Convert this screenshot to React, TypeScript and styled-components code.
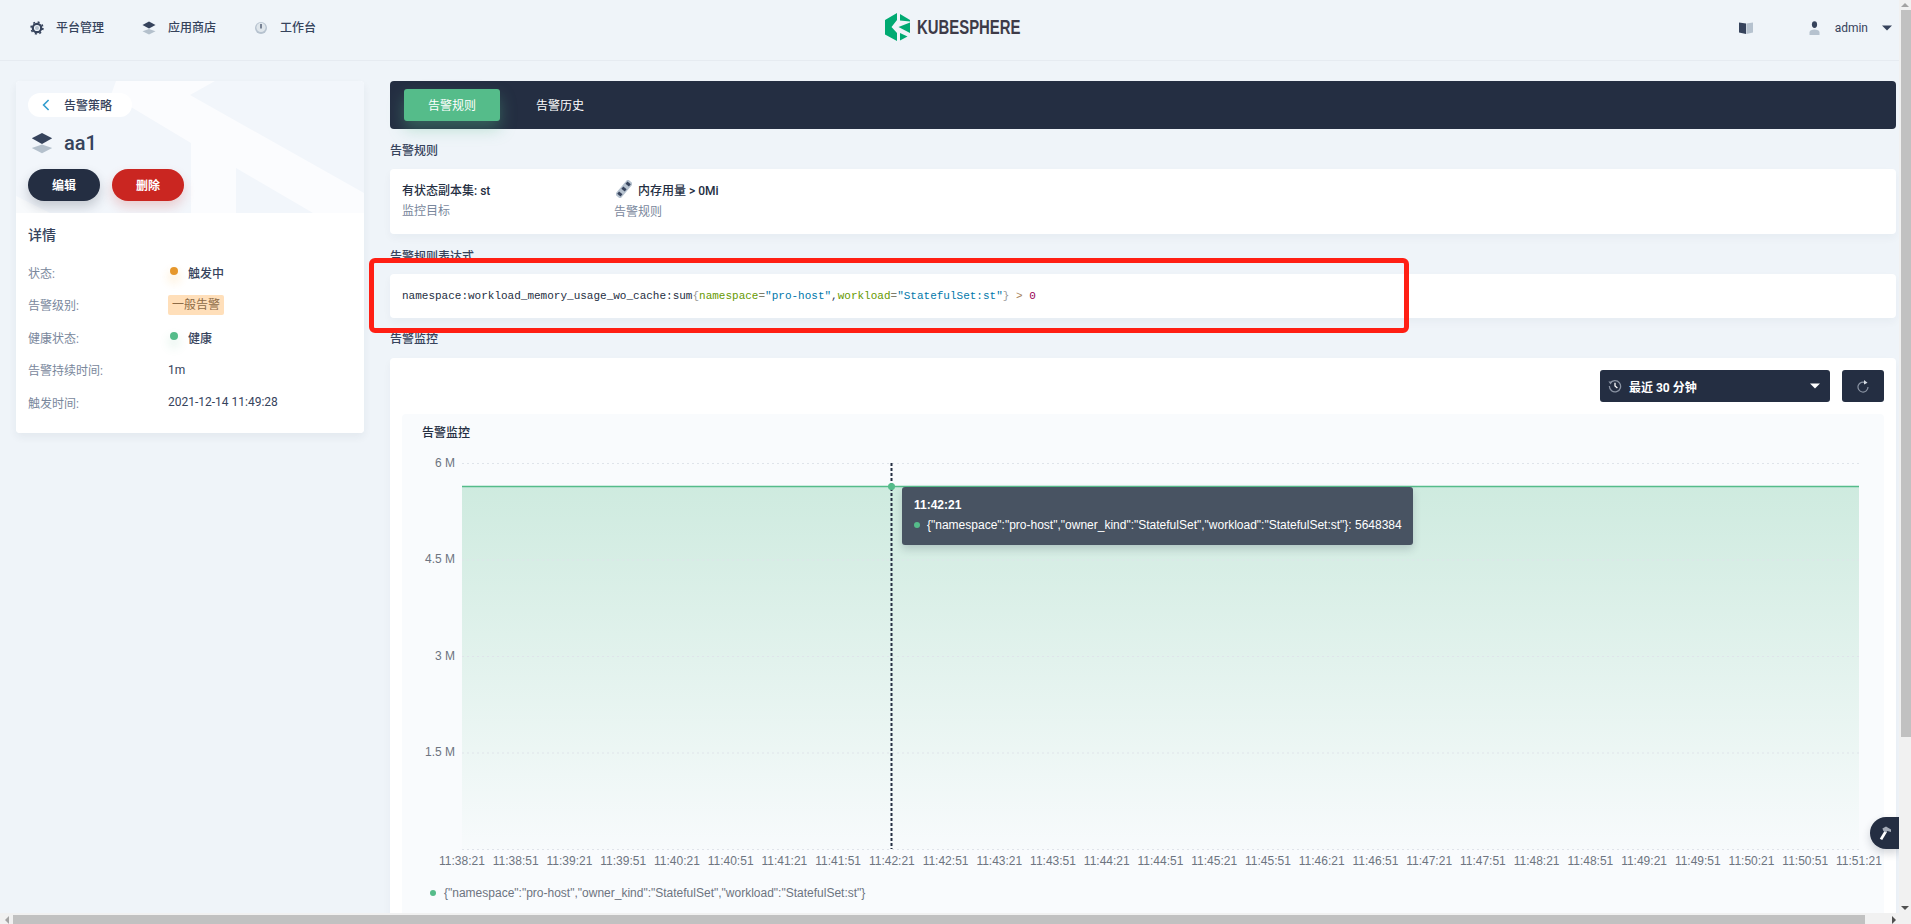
import React from 'react';
import styled, { createGlobalStyle } from 'styled-components';

const sans = `Roboto, "Noto Sans CJK SC", "Liberation Sans", sans-serif`;
const chartFont = `"Liberation Sans", Arial, sans-serif`;

const Global = createGlobalStyle`
  html, body { margin: 0; padding: 0; height: 100%; overflow: hidden; background: #eff4f9; }
  body { font-family: ${sans}; font-size: 12px; color: #242e42; }
  * { box-sizing: border-box; }
`;

const Shell = styled.div`
  display: grid;
  grid-template-columns: 1fr 12px;
  grid-template-rows: 1fr 11px;
  width: 100vw;
  height: 100vh;
`;
const Viewport = styled.div`
  position: relative;
  overflow: hidden;
  background: #eff4f9;
`;
const TrackV = styled.div`
  background: #f1f1f1;
  display: flex;
  flex-direction: column;
  align-items: stretch;
`;
const TrackH = styled.div`
  background: #f1f1f1;
  display: flex;
  align-items: stretch;
  padding-top: 2px;
`;
const Corner = styled.div`
  background: #f1f1f1;
`;
const ArrowCell = styled.div<{ $size: number }>`
  flex: 0 0 ${p => p.$size}px;
  display: flex;
  align-items: center;
  justify-content: center;
`;
const ThumbV = styled.div`
  flex: 0 0 727px;
  margin-left: 2px;
  background: #c1c1c1;
`;
const ThumbH = styled.div`
  flex: 0 0 1852px;
  background: #c1c1c1;
`;
const Spacer = styled.div`
  flex: 1;
`;

const Header = styled.header`
  display: flex;
  align-items: center;
  justify-content: space-between;
  height: 61px;
  padding: 0 7px 5px 30px;
  border-bottom: 1px solid #e6ebf1;
  position: relative;
`;
const Nav = styled.nav`
  display: flex;
  align-items: center;
  gap: 38px;
`;
const NavItem = styled.div`
  display: flex;
  align-items: center;
  gap: 12px;
  font-weight: 500;
  color: #36435c;
  line-height: 16px;
`;
const LogoWrap = styled.div`
  position: absolute;
  left: 885px;
  top: 13px;
  display: flex;
  align-items: center;
  gap: 7px;
`;
const LogoText = styled.span`
  display: inline-block;
  font-family: "Liberation Sans", sans-serif;
  font-size: 20px;
  line-height: 28px;
  color: #3e3b48;
  font-weight: 700;
  transform: scaleX(0.745);
  transform-origin: left center;
`;
const UserArea = styled.div`
  display: flex;
  align-items: center;
  color: #36435c;
`;
const UserGap = styled.span`
  width: 56px;
`;
const UserName = styled.span`
  margin: 0 14px 0 15px;
  font-size: 12px;
`;

const Body = styled.main`
  display: flex;
  align-items: flex-start;
  gap: 26px;
  padding: 20px 3px 0 16px;
`;
const Side = styled.aside`
  flex: 0 0 348px;
  border-radius: 4px;
  overflow: hidden;
  background: #fff;
  box-shadow: 0 4px 8px rgba(36, 46, 66, 0.06);
`;
const Hero = styled.div`
  position: relative;
  height: 132px;
  padding: 12px;
  background: #f2f6fb;
`;
const HeroArt = styled.svg`
  position: absolute;
  inset: 0;
`;
const BackPill = styled.div`
  position: relative;
  display: flex;
  align-items: center;
  width: 104px;
  height: 24px;
  border-radius: 12px;
  background: #fff;
  padding: 0 0 1px 14px;
  gap: 14px;
  color: #36435c;
  font-weight: 500;
`;
const TitleRow = styled.div`
  position: relative;
  display: flex;
  align-items: center;
  margin-top: 13px;
  padding-left: 3px;
  gap: 11px;
  height: 26px;
`;
const Name = styled.h1`
  margin: 0;
  font-size: 20px;
  line-height: 26px;
  font-weight: 500;
  color: #36435c;
`;
const Buttons = styled.div`
  position: relative;
  display: flex;
  gap: 12px;
  margin-top: 13px;
`;
const PillButton = styled.button<{ $color: string; $shadow: string }>`
  width: 72px;
  height: 32px;
  padding: 0 0 2px;
  border: 0;
  border-radius: 16px;
  background: ${p => p.$color};
  color: #fff;
  font-family: ${sans};
  font-size: 12px;
  font-weight: 700;
  box-shadow: 0 6px 12px ${p => p.$shadow};
`;
const Details = styled.section`
  position: relative;
  height: 220px;
  padding: 12px;
  background: #fff;
`;
const DetailsTitle = styled.h3`
  margin: 0 0 11px;
  font-size: 14px;
  line-height: 20px;
  font-weight: 500;
  color: #36435c;
`;
const DetailRow = styled.div`
  display: grid;
  grid-template-columns: 140px 1fr;
  align-items: center;
  height: 32.5px;
`;
const DetailLabel = styled.span`
  color: #79879c;
`;
const DetailValue = styled.span<{ $strong?: boolean }>`
  display: flex;
  align-items: center;
  gap: 10px;
  color: #36435c;
  font-weight: ${p => (p.$strong ? 500 : 400)};
`;
const Dot = styled.i<{ $color: string; $halo: string }>`
  display: block;
  width: 8px;
  height: 8px;
  margin: -2px 0 0 2px;
  border-radius: 50%;
  background: ${p => p.$color};
  box-shadow: 0 6px 8px 3px ${p => p.$halo};
`;
const Tag = styled.span`
  display: inline-block;
  height: 20px;
  padding: 0 4px;
  line-height: 20px;
  border-radius: 2px;
  background: #ffdfba;
  color: #8d6b47;
`;

const Content = styled.section`
  flex: 1;
  min-width: 0;
`;
const Tabs = styled.div`
  display: flex;
  align-items: center;
  height: 48px;
  padding: 0 8px 0 14px;
  border-radius: 4px;
  background: #242e42;
  gap: 36px;
`;
const Tab = styled.div<{ $active?: boolean }>`
  width: ${p => (p.$active ? '96px' : 'auto')};
  height: 32px;
  line-height: 34px;
  text-align: center;
  border-radius: 3px;
  color: #fff;
  background: ${p => (p.$active ? '#55bc8a' : 'transparent')};
  box-shadow: ${p => (p.$active ? '0 8px 16px rgba(85, 188, 138, 0.36)' : 'none')};
`;
const SectionTitle = styled.h4<{ $top: number; $bottom: number }>`
  margin: ${p => p.$top}px 0 ${p => p.$bottom}px;
  font-size: 12px;
  line-height: 16px;
  font-weight: 500;
  color: #36435c;
`;
const Card = styled.div`
  border-radius: 4px;
  background: #fff;
  box-shadow: 0 4px 8px rgba(36, 46, 66, 0.04);
`;
const RuleCard = styled(Card)`
  display: flex;
  height: 65px;
  padding: 10px 12px;
`;
const RuleCol = styled.div<{ $width: number }>`
  flex: 0 0 ${p => p.$width}px;
  display: flex;
  flex-direction: column;
`;
const RuleMain = styled.div`
  display: flex;
  align-items: center;
  height: 20px;
  gap: 6px;
  font-weight: 500;
  color: #242e42;
`;
const RuleIcon = styled.span`
  display: flex;
  margin-left: 2px;
`;
const RuleSub = styled.div<{ $top: number }>`
  margin-top: ${p => p.$top}px;
  line-height: 16px;
  color: #79879c;
`;
const ExprCard = styled(Card)`
  display: flex;
  align-items: center;
  height: 44px;
  padding: 0 12px;
`;
const Code = styled.code`
  font-family: "Liberation Mono", monospace;
  font-size: 11px;
  line-height: 16px;
  color: #242e42;
  white-space: pre;
`;
const Tok = styled.span<{ $c: string }>`
  color: ${p => p.$c};
`;
const Highlight = styled.div`
  position: absolute;
  left: 369px;
  top: 258px;
  width: 1040px;
  height: 75px;
  border: 5px solid #ff1f14;
  border-radius: 6px;
  pointer-events: none;
`;
const Monitor = styled(Card)`
  padding: 12px;
  height: 640px;
`;
const Toolbar = styled.div`
  display: flex;
  justify-content: flex-end;
  gap: 12px;
  height: 32px;
`;
const Select = styled.div`
  display: flex;
  align-items: center;
  width: 230px;
  height: 32px;
  padding: 0 10px 0 8px;
  gap: 7px;
  border-radius: 3px;
  background: #242e42;
  color: #fff;
  font-weight: 700;
`;
const SelectLabel = styled.span`
  flex: 1;
`;
const IconButton = styled.div`
  display: flex;
  align-items: center;
  justify-content: center;
  width: 42px;
  height: 32px;
  border-radius: 3px;
  background: #242e42;
`;
const ChartPanel = styled.div`
  position: relative;
  margin-top: 12px;
  padding: 11px 0 0;
  border-radius: 4px;
  background: #f9fbfd;
  height: 600px;
`;
const ChartTitle = styled.div`
  padding-left: 20px;
  line-height: 16px;
  font-weight: 500;
  color: #242e42;
`;
const ChartSvg = styled.svg`
  display: block;
  margin-top: 11px;
`;
const AxisText = styled.text`
  font-family: ${chartFont};
  font-size: 12px;
  fill: #6d7480;
`;
const Legend = styled.div`
  display: flex;
  align-items: center;
  gap: 8px;
  margin: 13px 0 0 28px;
  font-family: ${chartFont};
  color: #6d7480;
  line-height: 16px;
`;
const LegendDot = styled.i`
  display: block;
  flex: none;
  width: 6px;
  height: 6px;
  border-radius: 50%;
  background: #55bc8a;
`;
const Tooltip = styled.div`
  position: absolute;
  left: 500px;
  top: 73px;
  width: 511px;
  height: 58px;
  padding: 10px 12px;
  border-radius: 3px;
  background: #485362;
  color: #fff;
  font-family: ${chartFont};
  box-shadow: 0 4px 8px rgba(36, 46, 66, 0.2);
`;
const TooltipTime = styled.div`
  font-weight: 700;
  line-height: 16px;
`;
const TooltipRow = styled.div`
  display: flex;
  align-items: center;
  gap: 7px;
  margin-top: 4px;
  line-height: 16px;
  white-space: nowrap;
`;
const FloatTool = styled.div`
  position: absolute;
  right: 0;
  top: 817px;
  width: 29px;
  height: 32px;
  display: flex;
  align-items: center;
  justify-content: center;
  border-radius: 16px 0 0 16px;
  background: #242e42;
  box-shadow: 0 4px 8px rgba(36, 46, 66, 0.2);
`;

const Triangle = ({ dir }: { dir: 'up' | 'down' | 'left' | 'right' }) => {
  const pts = { up: '0,5 4,1 8,5', down: '0,1 8,1 4,5', left: '5,0 5,8 1,4', right: '1,0 5,4 1,8' }[dir];
  const horizontal = dir === 'left' || dir === 'right';
  return (
    <svg width={horizontal ? 6 : 8} height={horizontal ? 8 : 6}>
      <polygon points={pts} fill={dir === 'up' || dir === 'left' ? '#a3a3a3' : '#505050'} />
    </svg>
  );
};

const Gear = () => (
  <svg width="14" height="14" viewBox="0 0 14 14" fill="none">
    <circle cx="7" cy="7" r="4.2" stroke="#36435c" strokeWidth="2.2" />
    <circle cx="7" cy="7" r="5.9" stroke="#36435c" strokeWidth="1.6" strokeDasharray="2 2.63" />
    <circle cx="7" cy="7" r="2" fill="#b6c2cf" />
  </svg>
);
const Layers = ({ s = 14 }: { s?: number }) => (
  <svg width={s} height={s} viewBox="0 0 14 14">
    <polygon points="7,8 13.5,10.2 7,13.6 0.5,10.2" fill="#b4c0cc" />
    <polygon points="7,0.6 13.5,4 7,7.6 0.5,4" fill="#36435c" />
  </svg>
);
const Dial = () => (
  <svg width="14" height="14" viewBox="0 0 14 14">
    <circle cx="7" cy="7" r="6" fill="#b6c2cf" />
    <circle cx="7" cy="6.4" r="4.6" fill="#dfe6ec" />
    <rect x="6.4" y="3" width="1.2" height="4.5" fill="#36435c" />
  </svg>
);
const Logo = () => (
  <svg width="25" height="28" viewBox="0 0 25 28">
    <polygon points="0,7 12,0 12,7 6.5,14 12,20 12,28 0,21.5" fill="#00aa72" />
    <polygon points="15,1 25,7 25,8.5 15,7.5" fill="#00aa72" />
    <polygon points="13.5,14 25,9.5 25,20" fill="#00aa72" />
    <polygon points="15,20 22.5,23.5 15,27.5" fill="#00aa72" />
  </svg>
);
const Book = () => (
  <svg width="14" height="12" viewBox="0 0 14 12">
    <polygon points="0,0.5 7,1.5 7,12 0,10.5" fill="#36435c" />
    <polygon points="7.4,1.5 14,0.5 14,10.5 7.4,12" fill="#b6c2cf" />
  </svg>
);
const User = () => (
  <svg width="11" height="14" viewBox="0 0 11 14">
    <path d="M0.5 14v-2.5C0.5 9.5 3 8.6 5.5 8.6s5 .9 5 2.9V14z" fill="#b6c2cf" />
    <ellipse cx="5.5" cy="3.6" rx="2.6" ry="3.4" fill="#36435c" />
  </svg>
);
const Caret = ({ color }: { color: string }) => (
  <svg width="10" height="6" viewBox="0 0 10 6">
    <polygon points="0,0.5 10,0.5 5,5.5" fill={color} />
  </svg>
);
const Chevron = () => (
  <svg width="8" height="12" viewBox="0 0 8 12" fill="none">
    <path d="M6.6 1L1.6 6l5 5" stroke="#329dce" strokeWidth="1.6" />
  </svg>
);
const Memory = () => (
  <svg width="16" height="18" viewBox="0 0 16 18">
    <g transform="rotate(-50 8 9)">
      <rect x="-2" y="5.5" width="20" height="7" rx="1" fill="#b6c2cf" />
      <rect x="0" y="6.8" width="3" height="4.4" fill="#36435c" />
      <rect x="6.5" y="6.8" width="3" height="4.4" fill="#36435c" />
      <rect x="13" y="6.8" width="3" height="4.4" fill="#36435c" />
    </g>
  </svg>
);
const Clock = () => (
  <svg width="14" height="14" viewBox="0 0 14 14" fill="none">
    <path d="M2.2 4.4A5.6 5.6 0 1 1 1.4 7" stroke="#8a93a3" strokeWidth="1.3" />
    <polygon points="0.4,2.6 4,2.6 2.6,5.6" fill="#8a93a3" />
    <path d="M7 3.8V7l2.4 2" stroke="#fff" strokeWidth="1.3" />
  </svg>
);
const Refresh = () => (
  <svg width="12" height="13" viewBox="0 0 12 13" fill="none">
    <path d="M8.6 2.8A5 5 0 1 0 11 7" stroke="#8a93a3" strokeWidth="1.2" />
    <polygon points="7,0 10.5,2.8 7,4.6" fill="#d8dde4" />
  </svg>
);
const Hammer = () => (
  <svg width="14" height="14" viewBox="0 0 14 14">
    <polygon points="6.6,4.8 9,6 4.2,14 1.8,12.8" fill="#fff" />
    <polygon points="4.4,2.6 8,0.6 13,3.6 13,6 9.4,5 8,6.6 5.4,5" fill="#a4abb7" />
  </svg>
);

const times: string[] = [];
for (let i = 0; i <= 26; i++) {
  const total = 38 * 60 + 21 + i * 30;
  const m = Math.floor(total / 60);
  const s = total % 60;
  times.push(`11:${m}:${String(s).padStart(2, '0')}`);
}
const X0 = 60;
const X1 = 1457;
const Y = (py: number) => py - 452;
const grid = [
  { label: '6 M', y: 463.5 },
  { label: '4.5 M', y: 560 },
  { label: '3 M', y: 656.5 },
  { label: '1.5 M', y: 753 },
  { label: '', y: 849.5 },
];

const Chart = () => (
  <ChartSvg width="1482" height="420" viewBox="0 0 1482 420">
    <defs>
      <linearGradient id="area" x1="0" y1="0" x2="0" y2="1">
        <stop offset="0" stopColor="#55bc8a" stopOpacity="0.26" />
        <stop offset="1" stopColor="#55bc8a" stopOpacity="0.01" />
      </linearGradient>
    </defs>
    <rect x={X0} y={Y(486.5)} width={X1 - X0} height={849 - 486.5} fill="url(#area)" />
    {grid.map(g => (
      <g key={g.y}>
        <line x1={X0} x2={X1} y1={Y(g.y)} y2={Y(g.y)} stroke="#dfe4ea" strokeDasharray="2 3" />
        {g.label && (
          <AxisText x={53} y={Y(g.y) + 3} textAnchor="end">
            {g.label}
          </AxisText>
        )}
      </g>
    ))}
    <line x1={X0} x2={X1} y1={Y(486.5)} y2={Y(486.5)} stroke="#55bc8a" strokeWidth="1.5" />
    {times.map((t, i) => (
      <AxisText key={t} x={X0 + ((X1 - X0) * i) / 26} y={Y(865)} textAnchor="middle">
        {t}
      </AxisText>
    ))}
    <line x1={489.5} x2={489.5} y1={Y(463)} y2={Y(849)} stroke="#242e42" strokeWidth="2" strokeDasharray="3 2" />
    <circle cx={489.5} cy={Y(486.5)} r="3.5" fill="#55bc8a" />
  </ChartSvg>
);

const details: { label: string; node: React.ReactNode }[] = [
  {
    label: '状态:',
    node: (
      <DetailValue $strong>
        <Dot $color="#e6972b" $halo="rgba(245,166,35,0.12)" />
        触发中
      </DetailValue>
    ),
  },
  { label: '告警级别:', node: <DetailValue><Tag>一般告警</Tag></DetailValue> },
  {
    label: '健康状态:',
    node: (
      <DetailValue $strong>
        <Dot $color="#55bc8a" $halo="rgba(85,188,138,0.1)" />
        健康
      </DetailValue>
    ),
  },
  { label: '告警持续时间:', node: <DetailValue>1m</DetailValue> },
  { label: '触发时间:', node: <DetailValue>2021-12-14 11:49:28</DetailValue> },
];

export default function App() {
  return (
    <>
      <Global />
      <Shell>
        <Viewport>
          <Header>
            <Nav>
              <NavItem><Gear />平台管理</NavItem>
              <NavItem><Layers />应用商店</NavItem>
              <NavItem><Dial />工作台</NavItem>
            </Nav>
            <LogoWrap>
              <Logo />
              <LogoText>KUBESPHERE</LogoText>
            </LogoWrap>
            <UserArea>
              <Book />
              <UserGap />
              <User />
              <UserName>admin</UserName>
              <Caret color="#36435c" />
            </UserArea>
          </Header>
          <Body>
            <Side>
              <Hero>
                <HeroArt width="348" height="132" viewBox="0 0 348 132">
                  <polygon
                    points="100,0 199,0 174,14 348,112 348,132 297,132 220,87 220,132 175,132 175,62 95,14"
                    fill="#fbfcfe"
                  />
                  <polygon points="0,115 34,132 0,132" fill="#f8fafc" />
                </HeroArt>
                <BackPill><Chevron />告警策略</BackPill>
                <TitleRow><Layers s={22} /><Name>aa1</Name></TitleRow>
                <Buttons>
                  <PillButton $color="#242e42" $shadow="rgba(36,46,66,0.22)">编辑</PillButton>
                  <PillButton $color="#ca2621" $shadow="rgba(202,38,33,0.2)">删除</PillButton>
                </Buttons>
              </Hero>
              <Details>
                <DetailsTitle>详情</DetailsTitle>
                {details.map(d => (
                  <DetailRow key={d.label}>
                    <DetailLabel>{d.label}</DetailLabel>
                    {d.node}
                  </DetailRow>
                ))}
              </Details>
            </Side>
            <Content>
              <Tabs>
                <Tab $active>告警规则</Tab>
                <Tab>告警历史</Tab>
              </Tabs>
              <SectionTitle $top={14} $bottom={10}>告警规则</SectionTitle>
              <RuleCard>
                <RuleCol $width={212}>
                  <RuleMain>有状态副本集: st</RuleMain>
                  <RuleSub $top={4}>监控目标</RuleSub>
                </RuleCol>
                <RuleCol $width={300}>
                  <RuleMain><RuleIcon><Memory /></RuleIcon>内存用量 &gt; 0Mi</RuleMain>
                  <RuleSub $top={5}>告警规则</RuleSub>
                </RuleCol>
              </RuleCard>
              <SectionTitle $top={15} $bottom={9}>告警规则表达式</SectionTitle>
              <ExprCard>
                <Code>
                  namespace:workload_memory_usage_wo_cache:sum
                  <Tok $c="#999">{'{'}</Tok>
                  <Tok $c="#669900">namespace</Tok>
                  <Tok $c="#7d7d6b">=</Tok>
                  <Tok $c="#0077aa">"pro-host"</Tok>
                  <Tok $c="#36435c">,</Tok>
                  <Tok $c="#669900">workload</Tok>
                  <Tok $c="#7d7d6b">=</Tok>
                  <Tok $c="#0077aa">"StatefulSet:st"</Tok>
                  <Tok $c="#999">{'}'}</Tok>
                  {' '}
                  <Tok $c="#a67f59">&gt;</Tok>
                  {' '}
                  <Tok $c="#990055">0</Tok>
                </Code>
              </ExprCard>
              <SectionTitle $top={13} $bottom={11}>告警监控</SectionTitle>
              <Monitor>
                <Toolbar>
                  <Select>
                    <Clock />
                    <SelectLabel>最近 30 分钟</SelectLabel>
                    <Caret color="#fff" />
                  </Select>
                  <IconButton><Refresh /></IconButton>
                </Toolbar>
                <ChartPanel>
                  <ChartTitle>告警监控</ChartTitle>
                  <Chart />
                  <Legend>
                    <LegendDot />
                    {'{"namespace":"pro-host","owner_kind":"StatefulSet","workload":"StatefulSet:st"}'}
                  </Legend>
                  <Tooltip>
                    <TooltipTime>11:42:21</TooltipTime>
                    <TooltipRow>
                      <LegendDot />
                      {'{"namespace":"pro-host","owner_kind":"StatefulSet","workload":"StatefulSet:st"}: 5648384'}
                    </TooltipRow>
                  </Tooltip>
                </ChartPanel>
              </Monitor>
            </Content>
          </Body>
          <Highlight />
          <FloatTool><Hammer /></FloatTool>
        </Viewport>
        <TrackV>
          <ArrowCell $size={10}><Triangle dir="up" /></ArrowCell>
          <ThumbV />
          <Spacer />
          <ArrowCell $size={11}><Triangle dir="down" /></ArrowCell>
        </TrackV>
        <TrackH>
          <ArrowCell $size={13}><Triangle dir="left" /></ArrowCell>
          <ThumbH />
          <Spacer />
          <ArrowCell $size={11}><Triangle dir="right" /></ArrowCell>
        </TrackH>
        <Corner />
      </Shell>
    </>
  );
}
